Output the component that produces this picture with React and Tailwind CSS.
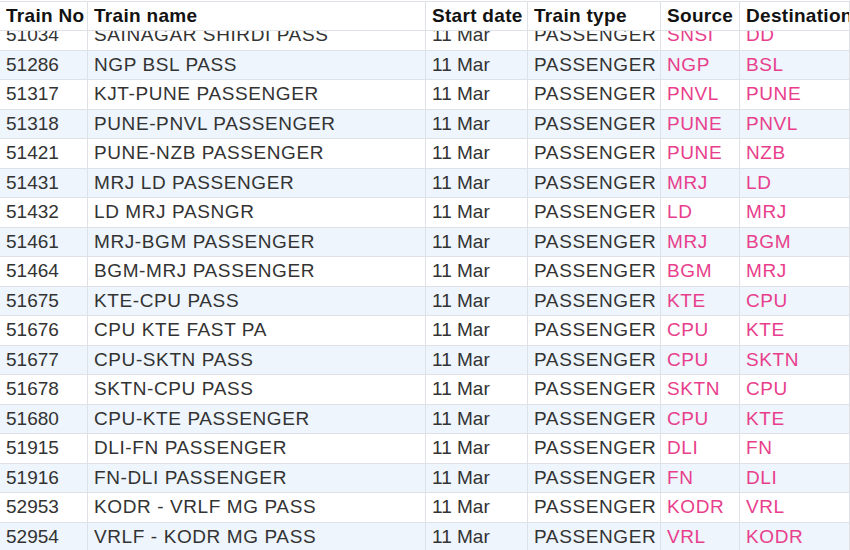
const trains = [
  ['51034', 'SAINAGAR SHIRDI PASS', 'SNSI', 'DD'],
  ['51286', 'NGP BSL PASS', 'NGP', 'BSL'],
  ['51317', 'KJT-PUNE PASSENGER', 'PNVL', 'PUNE'],
  ['51318', 'PUNE-PNVL PASSENGER', 'PUNE', 'PNVL'],
  ['51421', 'PUNE-NZB PASSENGER', 'PUNE', 'NZB'],
  ['51431', 'MRJ LD PASSENGER', 'MRJ', 'LD'],
  ['51432', 'LD MRJ PASNGR', 'LD', 'MRJ'],
  ['51461', 'MRJ-BGM PASSENGER', 'MRJ', 'BGM'],
  ['51464', 'BGM-MRJ PASSENGER', 'BGM', 'MRJ'],
  ['51675', 'KTE-CPU PASS', 'KTE', 'CPU'],
  ['51676', 'CPU KTE FAST PA', 'CPU', 'KTE'],
  ['51677', 'CPU-SKTN PASS', 'CPU', 'SKTN'],
  ['51678', 'SKTN-CPU PASS', 'SKTN', 'CPU'],
  ['51680', 'CPU-KTE PASSENGER', 'CPU', 'KTE'],
  ['51915', 'DLI-FN PASSENGER', 'DLI', 'FN'],
  ['51916', 'FN-DLI PASSENGER', 'FN', 'DLI'],
  ['52953', 'KODR - VRLF MG PASS', 'KODR', 'VRL'],
  ['52954', 'VRLF - KODR MG PASS', 'VRL', 'KODR'],
];

const cols = 'grid grid-cols-[88px_338px_102px_133px_79px_1fr]';
const cell = 'px-[6px] border-r border-[#dee2e6] whitespace-nowrap overflow-hidden flex items-center';
const caps = 'tracking-[0.6px]';

export default function App() {
  return (
    <div className="w-[850px] h-[550px] overflow-hidden bg-white flex flex-col font-['Liberation_Sans',Arial,sans-serif] text-[19px]">
      {/* Sticky header */}
      <div className="pt-px bg-white shrink-0 relative z-10">
        <div className={`${cols} h-[30px] border-t border-b border-[#dee2e6] bg-white font-bold text-[#121212] tracking-[0.3px]`}>
          <div className={cell}>Train No</div>
          <div className={cell}>Train name</div>
          <div className={cell}>Start date</div>
          <div className={cell}>Train type</div>
          <div className={cell}>Source</div>
          <div className={cell}>Destination</div>
        </div>
      </div>

      {/* Scrolled body */}
      <div className="flex-1 overflow-hidden">
        <div className="-mt-[10px]">
          {trains.map(([no, name, src, dst], i) => (
            <div
              key={no}
              className={`${cols} h-[29.5px] border-b border-[#dee2e6] text-[#333333] ${
                i % 2 ? 'bg-[#eef5fc]' : 'bg-white'
              }`}
            >
              <div className={cell}>{no}</div>
              <div className={`${cell} ${caps}`}>{name}</div>
              <div className={cell}>11 Mar</div>
              <div className={`${cell} ${caps}`}>PASSENGER</div>
              <div className={`${cell} ${caps} text-[#e83e8c]`}>{src}</div>
              <div className={`${cell} ${caps} text-[#e83e8c]`}>{dst}</div>
            </div>
          ))}
        </div>
      </div>
    </div>
  );
}
